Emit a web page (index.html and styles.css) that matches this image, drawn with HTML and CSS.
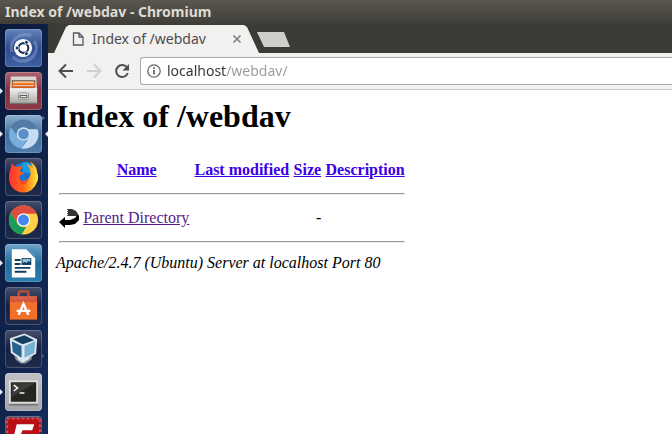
FILE: index.html
```html
<!DOCTYPE html>
<html lang="en">
<head>
<meta charset="utf-8">
<title>Index of /webdav</title>
<link rel="stylesheet" href="styles.css">
</head>
<body>
<header class="titlebar">Index of /webdav - Chromium</header>
<div class="desktop">
  <nav class="launcher" aria-label="Launcher">
    <button class="app dash" aria-label="Dash">
      <svg viewBox="0 0 38 38"><g fill="none" stroke="#a9bce0" stroke-width="3" opacity=".35"><path d="M7 23C4 11 14 3 27 6"/><path d="M30 12c6 9-1 20-13 20"/><path d="M8 28c5 6 15 7 22-1"/></g><circle cx="18.500" cy="19" r="9.300" fill="#fff"/><circle cx="19" cy="19" r="5" fill="none" stroke="#1d3163" stroke-width="2.200"/><g fill="#1d3163" stroke="#fff" stroke-width=".8"><circle cx="12.500" cy="19" r="2"/><circle cx="22" cy="13.200" r="2"/><circle cx="22" cy="24.800" r="2"/></g></svg>
    </button>
    <button class="app files running" aria-label="Files">
      <svg viewBox="0 0 38 38"><defs><linearGradient id="metal" x2="0" y2="1"><stop stop-color="#f2f2f0"/><stop offset="1" stop-color="#aaa9a6"/></linearGradient></defs><path d="M6 4h26l1 15H5z" fill="#d8d7d4"/><path d="M7 8h24v9H7z" fill="#5b4841"/><path d="M8 9h22v3H8z" fill="#f7c38f"/><path d="M7 11h24v2H7z" fill="#f46b1c"/><path d="M8 13h22v3H8z" fill="#fbe6ce"/><path d="M7 14h24v2H7z" fill="#d95c21"/><path d="M5 16h28v16H5z" fill="url(#metal)"/><path d="M5 31h28v1.500H5z" fill="#77716f"/><rect x="14" y="21" width="10" height="7" rx="1" fill="#eee" stroke="#8a8a8a"/><path d="M15.500 23.500h7v2.500h-7z" fill="#eee" stroke="#444"/></svg>
    </button>
    <button class="app chromium running active" aria-label="Chromium">
      <svg viewBox="0 0 38 38"><circle cx="19" cy="19" r="15" fill="#5a8fc5"/><path d="M6 12a15 15 0 0 1 27 2H19a6 6 0 0 0-6 5z" fill="#527ba4"/><path d="M6 12l7 10a7 7 0 0 0 8 4l-4 8A15 15 0 0 1 6 12z" fill="#79addb"/><path d="M23 14h10.500A15 15 0 0 1 17 34l7-10q3-5-1-10z" fill="#c7dcf1"/><circle cx="19" cy="19" r="7" fill="#d5e5f5"/><circle cx="19" cy="19" r="5.500" fill="#5b91cb"/></svg>
    </button>
    <button class="app" aria-label="Firefox">
      <svg viewBox="0 0 38 38"><defs><linearGradient id="fire" x1="0" y1=".3" x2="1" y2=".3"><stop stop-color="#ff3032"/><stop offset=".5" stop-color="#ff6a18"/><stop offset=".85" stop-color="#ffc52b"/><stop offset="1" stop-color="#ffe750"/></linearGradient></defs><circle cx="19" cy="17" r="13" fill="#176fd0"/><path d="M17 5q7-4 13 4l-3 7-8-2z" fill="#159de8"/><path d="M6 10l1-5 4 4q4-2 7-1l-3 5 5 2-5 3q-1 4 3 5 4 0 6-2 4-5 1-11l-3-4q5 1 7 4l-3-7q7 5 7 11 2 5 0 10-4 11-14 11Q5 34 4 20q0-6 2-10z" fill="url(#fire)"/><path d="M15 22q5 4 9-1-1 7-8 5z" fill="#f24a23"/></svg>
    </button>
    <button class="app" aria-label="Google Chrome">
      <svg viewBox="0 0 38 38"><circle cx="19" cy="19" r="15" fill="#ffcf45"/><path d="M6 11.500A15 15 0 0 1 32.500 12.500H19a7 7 0 0 0-6 10z" fill="#df4b3e"/><path d="M6 11.500l7 11a7 7 0 0 0 9 3.500l-5 8A15 15 0 0 1 6 11.500z" fill="#159d59"/><circle cx="19" cy="19" r="7" fill="#f5f5f5"/><circle cx="19" cy="19" r="5.600" fill="#4586ef"/></svg>
    </button>
    <button class="app writer running" aria-label="LibreOffice Writer">
      <svg viewBox="0 0 38 38"><path d="M7 5h15l9 9v20H7z" fill="#fff"/><path d="M22 5l9 9V7q0-2-2-2z" fill="#4b91bd"/><g fill="#103d5e"><path d="M10 15h6v2h-6zM10 19h6v2h-6zM10 23h16v2H10zM10 27h12v2H10z"/><path d="M17 14h10v7H17z"/></g><path d="M18 15h8v3l-2-1-2 2-2-1-2 1z" fill="#90c2df"/></svg>
    </button>
    <button class="app" aria-label="Ubuntu Software">
      <svg viewBox="0 0 38 38"><path d="M14 9V6q0-2 2-2h6q2 0 2 2v3" fill="none" stroke="#bd4e38" stroke-width="2.500"/><path d="M5 9h28v9H5z" fill="#d2573b"/><path d="M5 15h28v18H5z" fill="#f1702c"/><path d="M5 9h28l-3 3H8z" fill="#da624b"/><path d="M14 28l5-11 5 11M12 24h14" fill="none" stroke="#fff" stroke-width="2.500"/></svg>
    </button>
    <button class="app" aria-label="VirtualBox">
      <svg viewBox="0 0 38 38"><path d="M9 24l2 6 5 4h5l6-4 2-6z" fill="#7f9299"/><path d="M13 28l5 4 7-4" fill="none" stroke="#e5edf0" stroke-width="2"/><path d="M5 8l15-5 13 6-1 15-14 7L6 23z" fill="#dce8ee"/><path d="M8 9l12-4 10 5-12 4z" fill="#153e61"/><path d="M7 11l10 5v12l-9-6z" fill="#246390"/><path d="M20 16l11-5-1 12-10 5z" fill="#76b1cf"/></svg>
    </button>
    <button class="app terminal running" aria-label="Terminal">
      <svg viewBox="0 0 38 38"><path d="M4 7h30v25H4z" fill="#deded9"/><path d="M4 31h30v2H4z" fill="#777"/><path d="M6 9h26v20H6z" fill="#242622"/><path d="M7 10h24L7 24z" fill="#3b3c39"/><path d="M9 12l4 3-4 3M15 20h5" fill="none" stroke="#f5f5f5" stroke-width="1.500"/></svg>
    </button>
    <button class="app" aria-label="FileZilla">
      <svg viewBox="0 0 38 38"><path d="M2 2h34v36H2z" fill="#b90f17"/><path d="M2 2h34v36H2z" fill="none" stroke="#e4454a" stroke-width="2" stroke-dasharray="3 2"/><path d="M12 8h18l-2 6H18l-2 5h10l-2 6H14l-4 12H5z" fill="#fff"/></svg>
    </button>
  </nav>
  <div class="browser">
    <div class="tabstrip">
      <div class="tab">
        <svg class="page-icon" viewBox="0 0 12 14"><path d="M1.500 1H7l4 4v8H1.500zM7 1v4h4" fill="none" stroke="#5a5a5a" stroke-width="1.300"/></svg>
        <span class="tab-title">Index of /webdav</span>
        <button class="close" aria-label="Close tab"><svg viewBox="0 0 8 8"><path d="M.5.5l7 7M7.500.5l-7 7" stroke="#888" stroke-width="1.600"/></svg></button>
      </div>
      <button class="new-tab" aria-label="New tab"></button>
    </div>
    <div class="toolbar">
      <button class="tool" aria-label="Back"><svg viewBox="0 0 16 16"><path d="M15 8H2M8 1.500L1.500 8 8 14.500" fill="none" stroke="#4d4d4d" stroke-width="2"/></svg></button>
      <button class="tool" aria-label="Forward" disabled><svg viewBox="0 0 16 16"><path d="M1 8h13M8 1.500L14.500 8 8 14.500" fill="none" stroke="#cfcecc" stroke-width="2"/></svg></button>
      <button class="tool" aria-label="Reload"><svg viewBox="0 0 16 16"><path d="M13 4.500A6 6 0 1 0 13.800 10" fill="none" stroke="#4d4d4d" stroke-width="2"/><path d="M15 1v6.500H8.500z" fill="#4d4d4d"/></svg></button>
      <div class="address-box">
        <svg class="info" viewBox="0 0 14 14"><circle cx="7" cy="7" r="6.200" fill="none" stroke="#666" stroke-width="1.300"/><path d="M7 6v4.500M7 3.300v1.600" stroke="#555" stroke-width="1.600"/></svg>
        <input class="url" type="text" value="localhost/webdav/" aria-label="Address">
      </div>
    </div>
    <main class="page">
      <h1>Index of /webdav</h1>
      <table>
        <tr><th></th><th><a href="#name">Name</a></th><th><a href="#modified">Last modified</a></th><th><a href="#size">Size</a></th><th><a href="#description">Description</a></th></tr>
        <tr class="rule"><td colspan="5"><hr></td></tr>
        <tr><td><svg class="back-icon" viewBox="0 0 20 22"><path d="M0 15l6-5v3h5l5-2 3-4 1 2v4l-4 4-5 1H6v3z" fill="#000"/><path d="M9 2h4l4 2 2 3-1 2H9z" fill="#333"/><path d="M8 2h1v1H8zM8 4h1v1H8zM8 6h1v1H8zM8 8h1v1H8z" fill="#555"/></svg></td><td><a class="visited" href="#parent">Parent Directory</a></td><td></td><td class="size">-</td><td></td></tr>
        <tr class="rule"><td colspan="5"><hr></td></tr>
      </table>
      <address>Apache/2.4.7 (Ubuntu) Server at localhost Port 80</address>
    </main>
  </div>
</div>
</body>
</html>
```

FILE: styles.css
```css
* { box-sizing: border-box; }
body {
  margin: 0;
  height: 100vh;
  display: flex;
  flex-direction: column;
  overflow: hidden;
  background: #fff;
  font-family: "Noto Sans", sans-serif;
}
button { padding: 0; border: 0; background: none; }
svg { display: block; }

.titlebar {
  flex: none;
  height: 24px;
  padding-left: 5px;
  background: linear-gradient(#59574f, #3f3e39);
  color: #dfdbd2;
  font-size: 14px;
  font-weight: 700;
  line-height: 24px;
}
.desktop { flex: 1; min-height: 0; display: flex; }

.launcher {
  flex: none;
  width: 48px;
  padding: 5px;
  display: flex;
  flex-direction: column;
  gap: 5px;
  overflow: hidden;
  background:
    radial-gradient(circle at 43px 94px, #446c9a 0 1px, transparent 2px),
    radial-gradient(circle at 22px 222px, #446c9a 0 1px, transparent 2px),
    radial-gradient(circle at 42px 332px, #446c9a 0 1px, transparent 2px),
    linear-gradient(100deg, #0a1838, #142b59);
}
.app {
  position: relative;
  flex: none;
  width: 37px;
  height: 38px;
  border-radius: 4px;
  background: linear-gradient(#46506d, #17213f 48%, #202b4b);
  box-shadow: inset 0 0 0 1px #ffffff30;
}
.app svg { width: 100%; height: 100%; }
.dash { background: linear-gradient(#6583bb, #2e4d8f 50%, #3f60a5); }
.files { background: linear-gradient(#ad6470, #832e3d 50%, #8d3a47); }
.chromium { background: linear-gradient(#8fb0d0, #426f9d 50%, #4d7eac); }
.writer { background: linear-gradient(#70a5c9, #236c9c 50%, #2c7dad); }
.terminal { background: linear-gradient(#bfc1c5, #a3a5aa); }
.running::before, .active::after {
  content: "";
  position: absolute;
  top: 16px;
  left: -5px;
  border: 3px solid transparent;
  border-right: 0;
  border-left-color: #e4e7ec;
}
.active::after {
  left: auto;
  right: -6px;
  border: 3px solid transparent;
  border-left: 0;
  border-right-color: #e4e7ec;
}

.browser { flex: 1; min-width: 0; }
.tabstrip {
  height: 29px;
  padding-left: 6px;
  display: flex;
  background: #3c3b37;
}
.tab {
  width: 205px;
  height: 28px;
  margin-top: 1px;
  padding: 0 18px;
  display: flex;
  align-items: center;
  background: #f2f1f0;
  clip-path: polygon(0 100%, 12px 2px, 15px 0, calc(100% - 15px) 0, calc(100% - 12px) 2px, 100% 100%);
}
.page-icon { width: 12px; height: 14px; }
.tab-title {
  flex: 1;
  padding-left: 8px;
  color: #4c4c4c;
  font-size: 14px;
  line-height: 20px;
  white-space: nowrap;
}
.close svg { width: 8px; height: 8px; }
.new-tab {
  width: 33px;
  height: 15px;
  margin-top: 8px;
  margin-left: -2px;
  background: #cfcecc;
  clip-path: polygon(0 0, 27px 0, 100% 100%, 7px 100%);
}
.toolbar {
  height: 37px;
  padding-left: 10px;
  display: flex;
  align-items: center;
  gap: 12px;
  overflow: hidden;
  background: #f2f1f0;
  border-bottom: 1px solid #cbcac8;
}
.tool { flex: none; width: 16px; height: 16px; }
.tool svg { width: 16px; height: 16px; }
.address-box {
  flex: 1;
  height: 28px;
  margin-left: -2px;
  padding-left: 6px;
  display: flex;
  align-items: center;
  gap: 6px;
  background: #fff;
  border: 1px solid #acaba9;
  border-right: 0;
  border-radius: 3px 0 0 3px;
}
.info { flex: none; width: 14px; height: 14px; }
.url {
  flex: 1;
  min-width: 0;
  padding: 0;
  border: 0;
  outline: 0;
  background: linear-gradient(90deg, #333 59px, #999 59px);
  -webkit-background-clip: text;
  background-clip: text;
  color: transparent;
  font: 14px/20px "Noto Sans", sans-serif;
}

.page {
  padding: 8px;
  font: 16px/18px "Liberation Serif", serif;
  color: #000;
}
h1 { margin: 0 0 21px; font-size: 32px; line-height: 37px; }
table { width: 352px; border-spacing: 2px; }
th, td { height: 24px; padding: 1px; vertical-align: middle; }
.rule td { height: 20px; }
hr { margin: 8px 0; border: 1px solid; border-color: #9a9a9a #eee #eee #9a9a9a; }
a { color: #3c00e8; }
.visited { color: #551a8b; }
.size { text-align: right; }
.back-icon { width: 20px; height: 22px; }
address { font-style: italic; }
```
